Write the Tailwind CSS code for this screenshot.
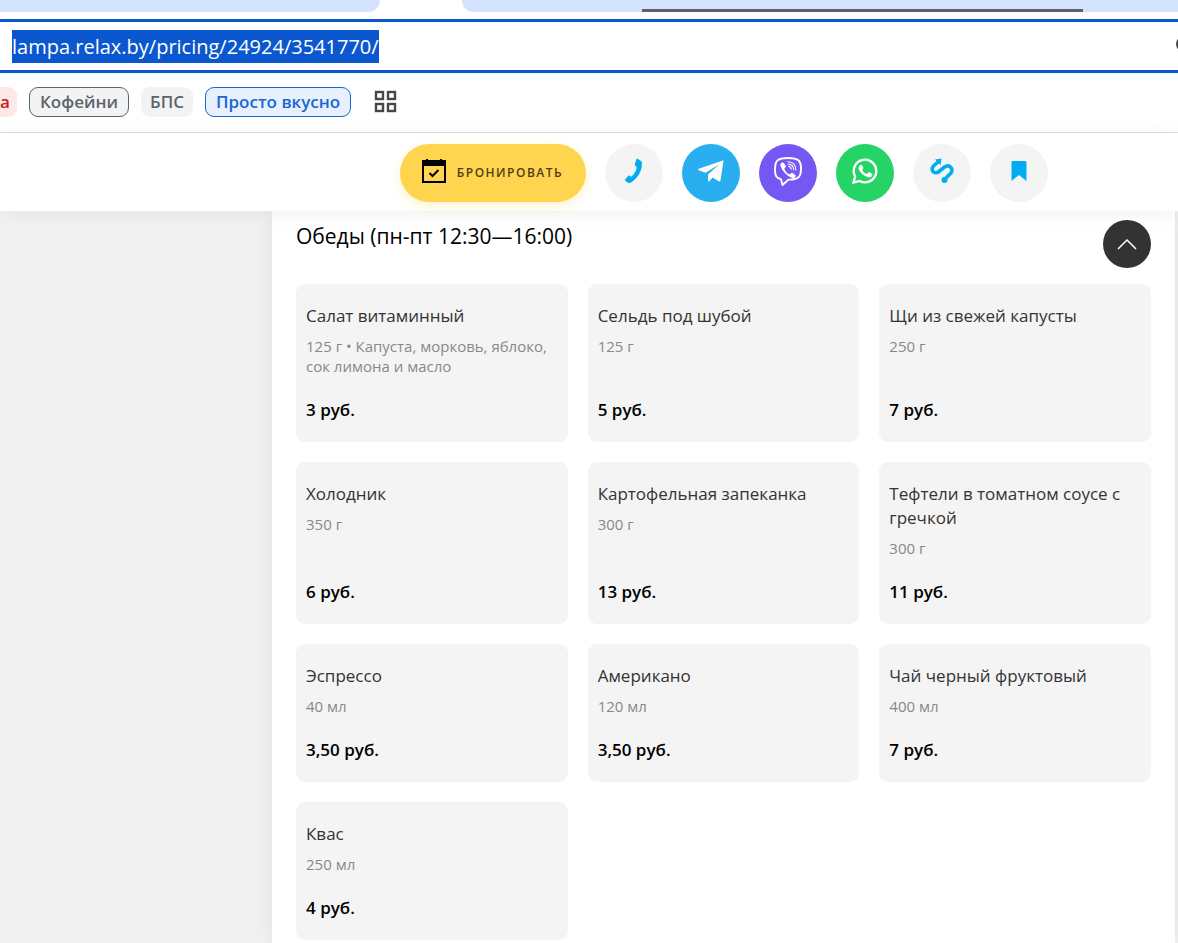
<!DOCTYPE html>
<html lang="ru">
  <head>
    <meta charset="UTF-8" />
    <meta name="viewport" content="width=device-width, initial-scale=1.0" />
    <title>Лампа - Обеды</title>

    <!-- Tailwind CSS for styling -->
    <script src="https://cdn.jsdelivr.net/npm/@tailwindcss/browser@4"></script>
  </head>
  <body
    class="flex min-h-screen flex-col bg-white font-['Open_Sans','Noto_Sans',sans-serif] text-black"
  >
    <!-- Tab strip -->
    <div class="flex h-[12px] gap-[82px]">
      <div class="w-[380px] rounded-br-[14px] bg-[#d3e3fd]"></div>
      <div
        class="flex flex-1 items-end rounded-bl-[14px] bg-[#d3e3fd] pl-[180px]"
      >
        <div class="h-[3px] w-[441px] bg-[#5f6368]"></div>
      </div>
    </div>

    <!-- Address bar -->
    <div
      class="mt-[7px] flex h-[54px] items-center justify-between border-y-3 border-[#0b57d0] pl-[12px]"
    >
      <input
        type="text"
        aria-label="Адрес"
        value="lampa.relax.by/pricing/24924/3541770/"
        class="field-sizing-content h-[33px] bg-[#0b57d0] text-[20px] text-white outline-none"
      />
      <svg width="2" height="18" viewBox="0 0 2 18" class="mb-[4px]">
        <circle cx="8" cy="9" r="7" fill="none" stroke="#444746" stroke-width="2" />
      </svg>
    </div>

    <!-- Bookmarks bar -->
    <nav
      class="flex h-[60px] items-center gap-[12px] border-b border-[#dfe1e1] pb-[2px] text-[17px] leading-[28px] font-semibold text-[#5f6368]"
    >
      <a href="#" class="rounded-r-[9px] bg-[#fce8e6] py-px pr-[7px] text-[#c5221f]">а</a>
      <a href="#" class="rounded-[9px] border border-[#5f6368] bg-[#f1f3f4] px-[10px]">Кофейни</a>
      <a href="#" class="rounded-[9px] bg-[#f1f3f4] px-[9px] py-px">БПС</a>
      <a href="#" class="rounded-[9px] border border-[#1967d2] bg-[#e8f0fe] px-[10px] text-[#1967d2]">Просто вкусно</a>
      <button type="button" aria-label="Группы вкладок" class="ml-[11px]">
        <svg width="23" height="23" viewBox="0 0 23 23" fill="none" stroke="#474747" stroke-width="2.4">
          <rect x="2" y="2" width="7" height="7" />
          <rect x="14" y="2" width="7" height="7" />
          <rect x="2" y="14" width="7" height="7" />
          <rect x="14" y="14" width="7" height="7" />
        </svg>
      </button>
    </nav>

    <!-- Sticky contacts header -->
    <header
      class="relative z-10 flex justify-center gap-[19px] bg-white pt-[11px] pr-[3px] pb-[9px] pl-[272px] shadow-[0_2px_20px_rgba(0,0,0,0.06)]"
    >
      <button
        type="button"
        class="flex h-[58px] w-[186px] items-center justify-center gap-[11px] rounded-full bg-[#ffd54f] text-[12px] font-semibold tracking-[1.5px] text-[#4d3f14] shadow-[0_4px_12px_rgba(255,213,79,0.3)]"
      >
        <svg width="24" height="26" viewBox="0 0 24 26" class="mb-[4px]">
          <path d="M4 1h2v1h12V1h2v1h4v23H0V2h4z" fill="#000" />
          <path d="M2 8h20v15H2z" fill="#ffd54f" />
          <path d="m7.500 15 3 3 6-6" fill="none" stroke="#000" stroke-width="2" />
        </svg>
        БРОНИРОВАТЬ
      </button>
      <a href="#" aria-label="Телефон" class="flex size-[58px] items-center justify-center rounded-full bg-[#f4f4f4]">
        <svg width="20" height="26" viewBox="0 0 20 26" fill="#00aeef" class="mb-[4px]">
          <path d="M12.500 1c.4-.4 1-.3 1.500.1l2.600 1.600c.8.500 1.200 1.100 1.300 2.200.3 7.300-3.500 14.300-9.800 18.900-1.300.9-2.500 1.600-3.700 1.100l-3-2.200c-.5-.4-.6-1-.2-1.400l3-3.400c.4-.4.9-.4 1.400-.1l1.500 1c3.400-2.600 5.300-6.100 5.700-10.100l-1.500-.8c-.5-.3-.7-.8-.5-1.400z" />
        </svg>
      </a>
      <a href="#" aria-label="Telegram" class="flex size-[58px] items-center justify-center rounded-full bg-[#29aff0]">
        <svg width="26" height="22" viewBox="0 0 26 22" fill="#fff" class="mb-[4px]">
          <path d="M25.600.3 22.500 20.600c-.2.900-.9 1.200-1.700.7l-6.300-3.900-3.200 3.800c-.6.600-1.300.3-1.300-.6v-6.200L21.300 4.200 7.600 12.800.8 10.200c-.9-.4-.9-1 0-1.400z" />
        </svg>
      </a>
      <a href="#" aria-label="Viber" class="flex size-[58px] items-center justify-center rounded-full bg-[#7558f3]">
        <svg width="30" height="30" viewBox="0 0 30 30" fill="none" stroke="#fff" class="mb-[4px]">
          <path d="M8 23.300C3.200 22 2 20 2 13.500 2 4.500 4.500 2 15 2s13 2.500 13 10.700-2.500 11.100-12.500 10.900L9.500 29z" stroke-width="1.900" stroke-linejoin="round" />
          <path d="M9.300 6.600c.6-.3 1.100-.1 1.500.4l1.900 2.800c.4.700.2 1.200-.4 1.700-1 .8-1 1.500-.5 2.600.9 1.900 2.100 3.100 4 3.900.9.400 1.400.2 2-.6.500-.7 1.100-.8 1.800-.4l2.700 1.900c.6.500.6 1 .2 1.700-1 1.600-2.100 2.200-3.600 1.500C13.300 19.300 9.500 15.300 7.500 9.900c-.5-1.500.3-2.600 1.800-3.300z" fill="#fff" stroke="none" />
          <path d="M15.500 10.300c1.700.1 2.600 1.100 2.700 2.800M15.200 8c3.400.2 5.300 2 5.400 5.600M14.800 5.700c5 .2 7.900 3 8 8.200" stroke-width="1.100" stroke-linecap="round" />
        </svg>
      </a>
      <a href="#" aria-label="WhatsApp" class="flex size-[58px] items-center justify-center rounded-full bg-[#25d366]">
        <svg width="26" height="26" viewBox="0 0 26 26" class="mb-[4px]">
          <path d="m1.500 24.500 1.600-6A11.300 11.300 0 1 1 7.700 23z" fill="none" stroke="#fff" stroke-width="2.300" />
          <path d="M8.300 7c.8-.6 1.700-.4 2.100.4l.9 2.100c.2.500 0 1-1.100 2.200 1.200 2.200 2.700 3.500 4.900 4.400l1.200-1.500c.3-.4.7-.5 1.200-.3l2.400 1.200c.6.300.6.700.5 1.300-.4 1.900-2.400 2.900-4.200 2.500-4.700-1.200-7.700-4.100-9.300-7.700C6.200 9.900 7 8.100 8.300 7z" fill="#fff" />
        </svg>
      </a>
      <a href="#" aria-label="Маршрут" class="flex size-[58px] items-center justify-center rounded-full bg-[#f4f4f4]">
        <svg width="24" height="26" viewBox="0 0 24 26" class="mb-[4px]">
          <path d="M8 4 4 7.500C-.3 11.800 4.300 17.300 9 13.500L14.500 9C19.500 5.500 24.500 11.500 20.500 15.500L14 22" fill="none" stroke="#00aeef" stroke-width="3.600" />
          <path d="m5 1.500 6.500-.9-.9 6.700z" fill="#00aeef" />
          <circle cx="14.500" cy="22" r="3" fill="#00aeef" />
        </svg>
      </a>
      <a href="#" aria-label="В закладки" class="flex size-[58px] items-center justify-center rounded-full bg-[#f4f4f4]">
        <svg width="16" height="22" viewBox="0 0 16 22" class="mb-[4px]">
          <path d="M1.500 1h12.500a1.500 1.500 0 0 1 1.500 1.500V21L8 15l-7.500 6V2a1 1 0 0 1 1-1z" fill="#00aeef" />
        </svg>
      </a>
    </header>

    <main class="flex flex-1 bg-[#f1f1f1]">
      <div class="w-[272px] shrink-0"></div>

      <section class="flex-1 bg-white px-[24px] pt-[9px] shadow-[0_0_20px_rgba(0,0,0,0.07)]">
        <div class="mb-[16px] flex items-start justify-between">
          <h2 class="text-[21px] leading-[32px]">Обеды (пн-пт 12:30—16:00)</h2>
          <button
            type="button"
            aria-label="Наверх"
            class="flex size-[48px] items-center justify-center rounded-full bg-[#333]"
          >
            <svg width="20" height="12" viewBox="0 0 20 12" fill="none" stroke="#fff" stroke-width="1.500">
              <path d="m1 11 9-9 9 9" />
            </svg>
          </button>
        </div>

        <!-- Menu cards -->
        <div class="grid grid-cols-3 gap-[20px] text-[17px] leading-[24px]">
          <article class="flex flex-col rounded-[9px] bg-[#f4f4f4] px-[10px] py-[20px]">
            <h3 class="text-[#333]">Салат витаминный</h3>
            <p class="mt-[8px] text-[15px] leading-[20px] text-[#888]">125 г • Капуста, морковь, яблоко, сок лимона и масло</p>
            <p class="mt-auto pt-[22px] font-semibold">3 руб.</p>
          </article>
          <article class="flex flex-col rounded-[9px] bg-[#f4f4f4] px-[10px] py-[20px]">
            <h3 class="text-[#333]">Сельдь под шубой</h3>
            <p class="mt-[8px] text-[15px] leading-[20px] text-[#888]">125 г</p>
            <p class="mt-auto pt-[22px] font-semibold">5 руб.</p>
          </article>
          <article class="flex flex-col rounded-[9px] bg-[#f4f4f4] px-[10px] py-[20px]">
            <h3 class="text-[#333]">Щи из свежей капусты</h3>
            <p class="mt-[8px] text-[15px] leading-[20px] text-[#888]">250 г</p>
            <p class="mt-auto pt-[22px] font-semibold">7 руб.</p>
          </article>
          <article class="flex flex-col rounded-[9px] bg-[#f4f4f4] px-[10px] py-[20px]">
            <h3 class="text-[#333]">Холодник</h3>
            <p class="mt-[8px] text-[15px] leading-[20px] text-[#888]">350 г</p>
            <p class="mt-auto pt-[22px] font-semibold">6 руб.</p>
          </article>
          <article class="flex flex-col rounded-[9px] bg-[#f4f4f4] px-[10px] py-[20px]">
            <h3 class="text-[#333]">Картофельная запеканка</h3>
            <p class="mt-[8px] text-[15px] leading-[20px] text-[#888]">300 г</p>
            <p class="mt-auto pt-[22px] font-semibold">13 руб.</p>
          </article>
          <article class="flex flex-col rounded-[9px] bg-[#f4f4f4] px-[10px] py-[20px]">
            <h3 class="text-[#333]">Тефтели в томатном соусе с гречкой</h3>
            <p class="mt-[8px] text-[15px] leading-[20px] text-[#888]">300 г</p>
            <p class="mt-auto pt-[22px] font-semibold">11 руб.</p>
          </article>
          <article class="flex flex-col rounded-[9px] bg-[#f4f4f4] px-[10px] py-[20px]">
            <h3 class="text-[#333]">Эспрессо</h3>
            <p class="mt-[8px] text-[15px] leading-[20px] text-[#888]">40 мл</p>
            <p class="mt-auto pt-[22px] font-semibold">3,50 руб.</p>
          </article>
          <article class="flex flex-col rounded-[9px] bg-[#f4f4f4] px-[10px] py-[20px]">
            <h3 class="text-[#333]">Американо</h3>
            <p class="mt-[8px] text-[15px] leading-[20px] text-[#888]">120 мл</p>
            <p class="mt-auto pt-[22px] font-semibold">3,50 руб.</p>
          </article>
          <article class="flex flex-col rounded-[9px] bg-[#f4f4f4] px-[10px] py-[20px]">
            <h3 class="text-[#333]">Чай черный фруктовый</h3>
            <p class="mt-[8px] text-[15px] leading-[20px] text-[#888]">400 мл</p>
            <p class="mt-auto pt-[22px] font-semibold">7 руб.</p>
          </article>
          <article class="flex flex-col rounded-[9px] bg-[#f4f4f4] px-[10px] py-[20px]">
            <h3 class="text-[#333]">Квас</h3>
            <p class="mt-[8px] text-[15px] leading-[20px] text-[#888]">250 мл</p>
            <p class="mt-auto pt-[22px] font-semibold">4 руб.</p>
          </article>
        </div>
      </section>

      <div class="w-[3px] shrink-0"></div>
    </main>
  </body>
</html>
